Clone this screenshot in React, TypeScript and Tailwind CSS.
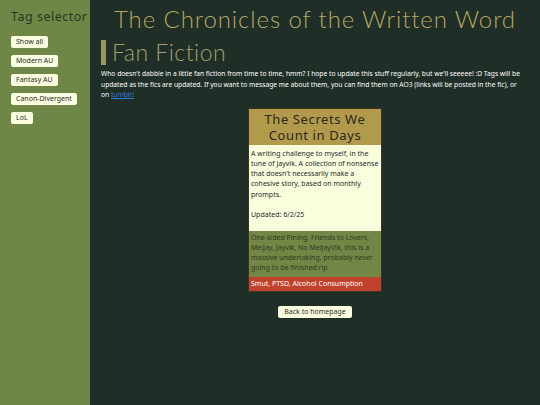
import React from 'react';

const tags = ['Show all', 'Modern AU', 'Fantasy AU', 'Canon-Divergent', 'LoL'];

export default function App() {
    return (
        <div className="flex h-[405px] w-[540px] overflow-hidden font-['Noto_Sans',sans-serif]">
            <aside className="w-[90px] shrink-0 bg-[#6e8746] pl-[11px] pt-[7px]">
                <h2 className="whitespace-nowrap text-[12.5px] leading-[20px] tracking-[0.5px] text-[#2a3723]">Tag selector</h2>
                <div className="mt-[9px] flex flex-col items-start gap-[7px]">
                    {tags.map((t) => (
                        <button
                            key={t}
                            className="h-[12px] whitespace-nowrap rounded-[2px] bg-[#fbfde1] px-[5px] text-[7px] leading-[12px] text-[#2b2b2b]"
                        >
                            {t}
                        </button>
                    ))}
                </div>
            </aside>

            <main className="w-[450px] min-w-0 shrink-0 bg-[#1f2e26] px-[11px]">
                <h1 className="pt-[3px] text-center font-['Lato',sans-serif] text-[24px] font-light leading-[32px] tracking-[0.9px] text-[#b7a865] whitespace-nowrap">
                    The Chronicles of the Written Word
                </h1>

                <div className="mt-[5px] flex items-center gap-[6px]">
                    <div className="h-[25px] w-[5px] bg-[#9c9462]" />
                    <h2 className="font-['Lato',sans-serif] text-[23px] font-light leading-[25px] tracking-[0.5px] text-[#a59e70]">Fan Fiction</h2>
                </div>

                <p className="mt-[4px] pr-[4px] text-[6.7px] leading-[10.5px] text-white">
                    Who doesn't dabble in a little fan fiction from time to time, hmm? I hope to update this stuff regularly, but we'll seeeee! :D Tags will be updated as the fics are updated. If you want to message me about them, you can find them on AO3 (links will be posted in the fic), or{' '}
                    <span className="whitespace-nowrap">
                        on <a href="#" className="text-[#2f7be0] underline">tumblr!</a>
                    </span>
                </p>

                <div className="mx-auto mt-[7px] w-[134px] border border-[#3a3420]">
                    <div className="bg-[#b29a4c] px-[4px] pb-[2px] pt-[2px] text-center text-[13px] leading-[16px] tracking-[0.6px] text-[#2b2818]">
                        The Secrets We Count in Days
                    </div>
                    <div className="h-[86px] bg-[#f9fedd] px-[2px] pt-[4px] text-[7px] leading-[10.3px] text-[#2a2a2a]">
                        <p>A writing challenge to myself, in the tune of Jayvik. A collection of nonsense that doesn't necessarily make a cohesive story, based on monthly prompts.</p>
                        <p className="mt-[10px]">Updated: 6/2/25</p>
                    </div>
                    <div className="bg-[#738646] px-[2px] pb-[3px] pt-[2px] text-[7px] leading-[10.3px] text-[#2e3a22]">
                        One-sided Pining, Friends to Lovers, Meljay, Jayvik, No MelJayVik, this is a massive undertaking, probably never going to be finished rip
                    </div>
                    <div className="bg-[#c0422c] px-[2px] py-[2px] text-[7px] leading-[10px] text-white">
                        Smut, PTSD, Alcohol Consumption
                    </div>
                </div>

                <div className="mt-[14px] flex justify-center">
                    <button className="h-[12px] rounded-[2px] bg-[#fbfde1] px-[6px] text-[7px] leading-[12px] text-[#2b2b2b]">
                        Back to homepage
                    </button>
                </div>
            </main>
        </div>
    );
}
